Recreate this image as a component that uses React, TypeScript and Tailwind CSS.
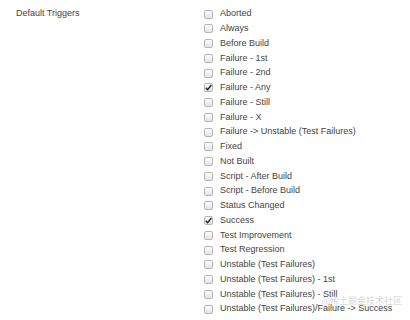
const triggers = [
  { name: "Aborted" },
  { name: "Always" },
  { name: "Before Build" },
  { name: "Failure - 1st" },
  { name: "Failure - 2nd" },
  { name: "Failure - Any", checked: true },
  { name: "Failure - Still" },
  { name: "Failure - X" },
  { name: "Failure -> Unstable (Test Failures)" },
  { name: "Fixed" },
  { name: "Not Built" },
  { name: "Script - After Build" },
  { name: "Script - Before Build" },
  { name: "Status Changed" },
  { name: "Success", checked: true },
  { name: "Test Improvement" },
  { name: "Test Regression" },
  { name: "Unstable (Test Failures)" },
  { name: "Unstable (Test Failures) - 1st" },
  { name: "Unstable (Test Failures) - Still" },
  { name: "Unstable (Test Failures)/Failure -> Success" },
];

const CheckBox = ({ checked }: { checked?: boolean }) => (
  <span className="relative flex h-[9px] w-[9px] items-center justify-center rounded-[2px] border border-[#b5b5b5] bg-gradient-to-b from-[#fdfdfd] to-[#e4e4e4]">
    {checked && (
      <svg viewBox="0 0 10 10" className="absolute h-[9px] w-[9px]">
        <path d="M2 5.2 L4 7.4 L8.2 2.2" fill="none" stroke="#222" strokeWidth="1.6" />
      </svg>
    )}
  </span>
);

const App = () => {
  return (
    <div className="relative h-[320px] w-[410px] overflow-hidden bg-white font-['Liberation_Sans',Arial,sans-serif] text-[9px] text-[#444]">
      <div className="flex pt-[6.8px]">
        <div className="w-[188px] pl-[16px]">
          <div className="flex h-[14.75px] items-center">Default Triggers</div>
        </div>
        <div className="flex flex-col">
          {triggers.map((t) => (
            <label key={t.name} className="flex h-[14.75px] items-center">
              <span className="ml-[16px] mr-[7px]">
                <CheckBox checked={t.checked} />
              </span>
              <span>{t.name}</span>
            </label>
          ))}
        </div>
      </div>
      <span className="absolute bottom-[13px] right-[8px] font-['Noto_Sans_CJK_SC',sans-serif] text-[9px] text-[#d8d8d8]">
        @稀土掘金技术社区
      </span>
    </div>
  );
};

export default App;
